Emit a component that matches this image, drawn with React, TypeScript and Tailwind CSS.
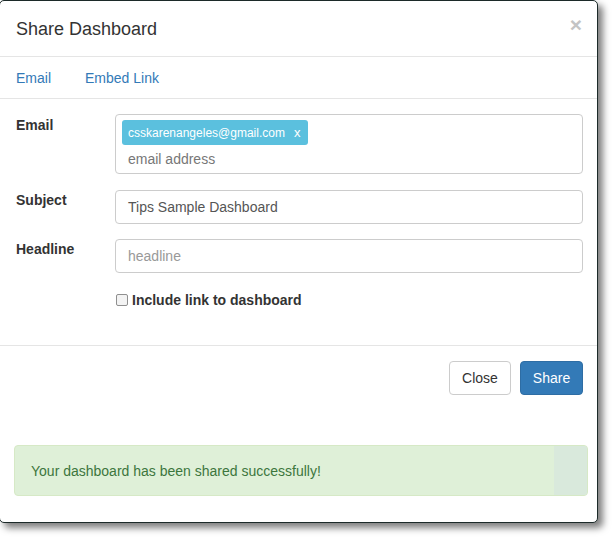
export default function App() {
  return (
    <div className="w-[614px] h-[538px] bg-white overflow-hidden font-['Liberation_Sans',Arial,sans-serif] text-[14px] leading-[20px] text-[#333]">
      <div className="relative -ml-px w-[599px] h-[523px] bg-white border border-[#1c2a29] rounded-[5px] shadow-[5px_5px_7px_rgba(0,0,0,0.5)] flex flex-col">
        <div className="h-[56px] shrink-0 flex items-center justify-between pl-4 pr-[15px] border-b border-[#e5e5e5]">
          <h4 className="text-[18px] leading-[24px] text-[#333]">Share Dashboard</h4>
          <button className="text-[21px] leading-none font-bold text-[#c4c4c4] -mt-2" aria-label="Close">
            ×
          </button>
        </div>

        <div className="h-[42px] shrink-0 flex items-center gap-[34px] pl-4 border-b border-[#e5e5e5] text-[#337ab7]">
          <a>Email</a>
          <a>Embed Link</a>
        </div>

        <div className="pt-[15px] pb-[35px] border-b border-[#e5e5e5]">
          <div className="flex">
            <label className="w-[115px] pl-4 pt-px font-bold">Email</label>
            <div className="w-[468px] h-[60px] border border-[#ccc] rounded-[4px] px-[6px] pt-[5px]">
              <span className="inline-flex items-center h-[25px] rounded-[3px] bg-[#5bc0de] pl-[6px] pr-[8px] text-white text-[12px] gap-[9px]">
                csskarenangeles@gmail.com
                <span className="text-[13px]">x</span>
              </span>
              <div className="mt-[4px] pl-[6px] text-[#777]">email address</div>
            </div>
          </div>

          <div className="flex mt-[16px]">
            <label className="w-[115px] pl-4 font-bold">Subject</label>
            <div className="w-[468px] h-[34px] border border-[#ccc] rounded-[4px] px-3 flex items-center text-[#555]">
              Tips Sample Dashboard
            </div>
          </div>

          <div className="flex mt-[15px]">
            <label className="w-[115px] pl-4 font-bold">Headline</label>
            <div className="w-[468px] h-[34px] border border-[#ccc] rounded-[4px] px-3 flex items-center text-[#999]">
              headline
            </div>
          </div>

          <label className="flex items-center gap-[4px] ml-[116px] mt-[17px] font-bold">
            <span className="w-[12px] h-[12px] border border-[#8f8f8f] rounded-[2px] bg-[#f3f3f3]" />
            Include link to dashboard
          </label>
        </div>

        <div className="flex justify-end gap-[9px] pt-[15px] pr-[14px]">
          <button className="w-[62px] h-[34px] border border-[#ccc] rounded-[4px] bg-white text-[#333]">
            Close
          </button>
          <button className="w-[63px] h-[34px] border border-[#2e6da4] rounded-[4px] bg-[#337ab7] text-white">
            Share
          </button>
        </div>

        <div className="ml-[14px] mt-[50px] w-[574px] h-[51px] rounded-[4px] border border-[#d6e9c6] bg-[#dff0d8] flex overflow-hidden">
          <div className="flex-1 flex items-center pl-[16px] text-[#3c763d]">
            Your dashboard has been shared successfully!
          </div>
          <div className="w-[33px] bg-[#d9e9dc]" />
        </div>
      </div>
    </div>
  )
}
